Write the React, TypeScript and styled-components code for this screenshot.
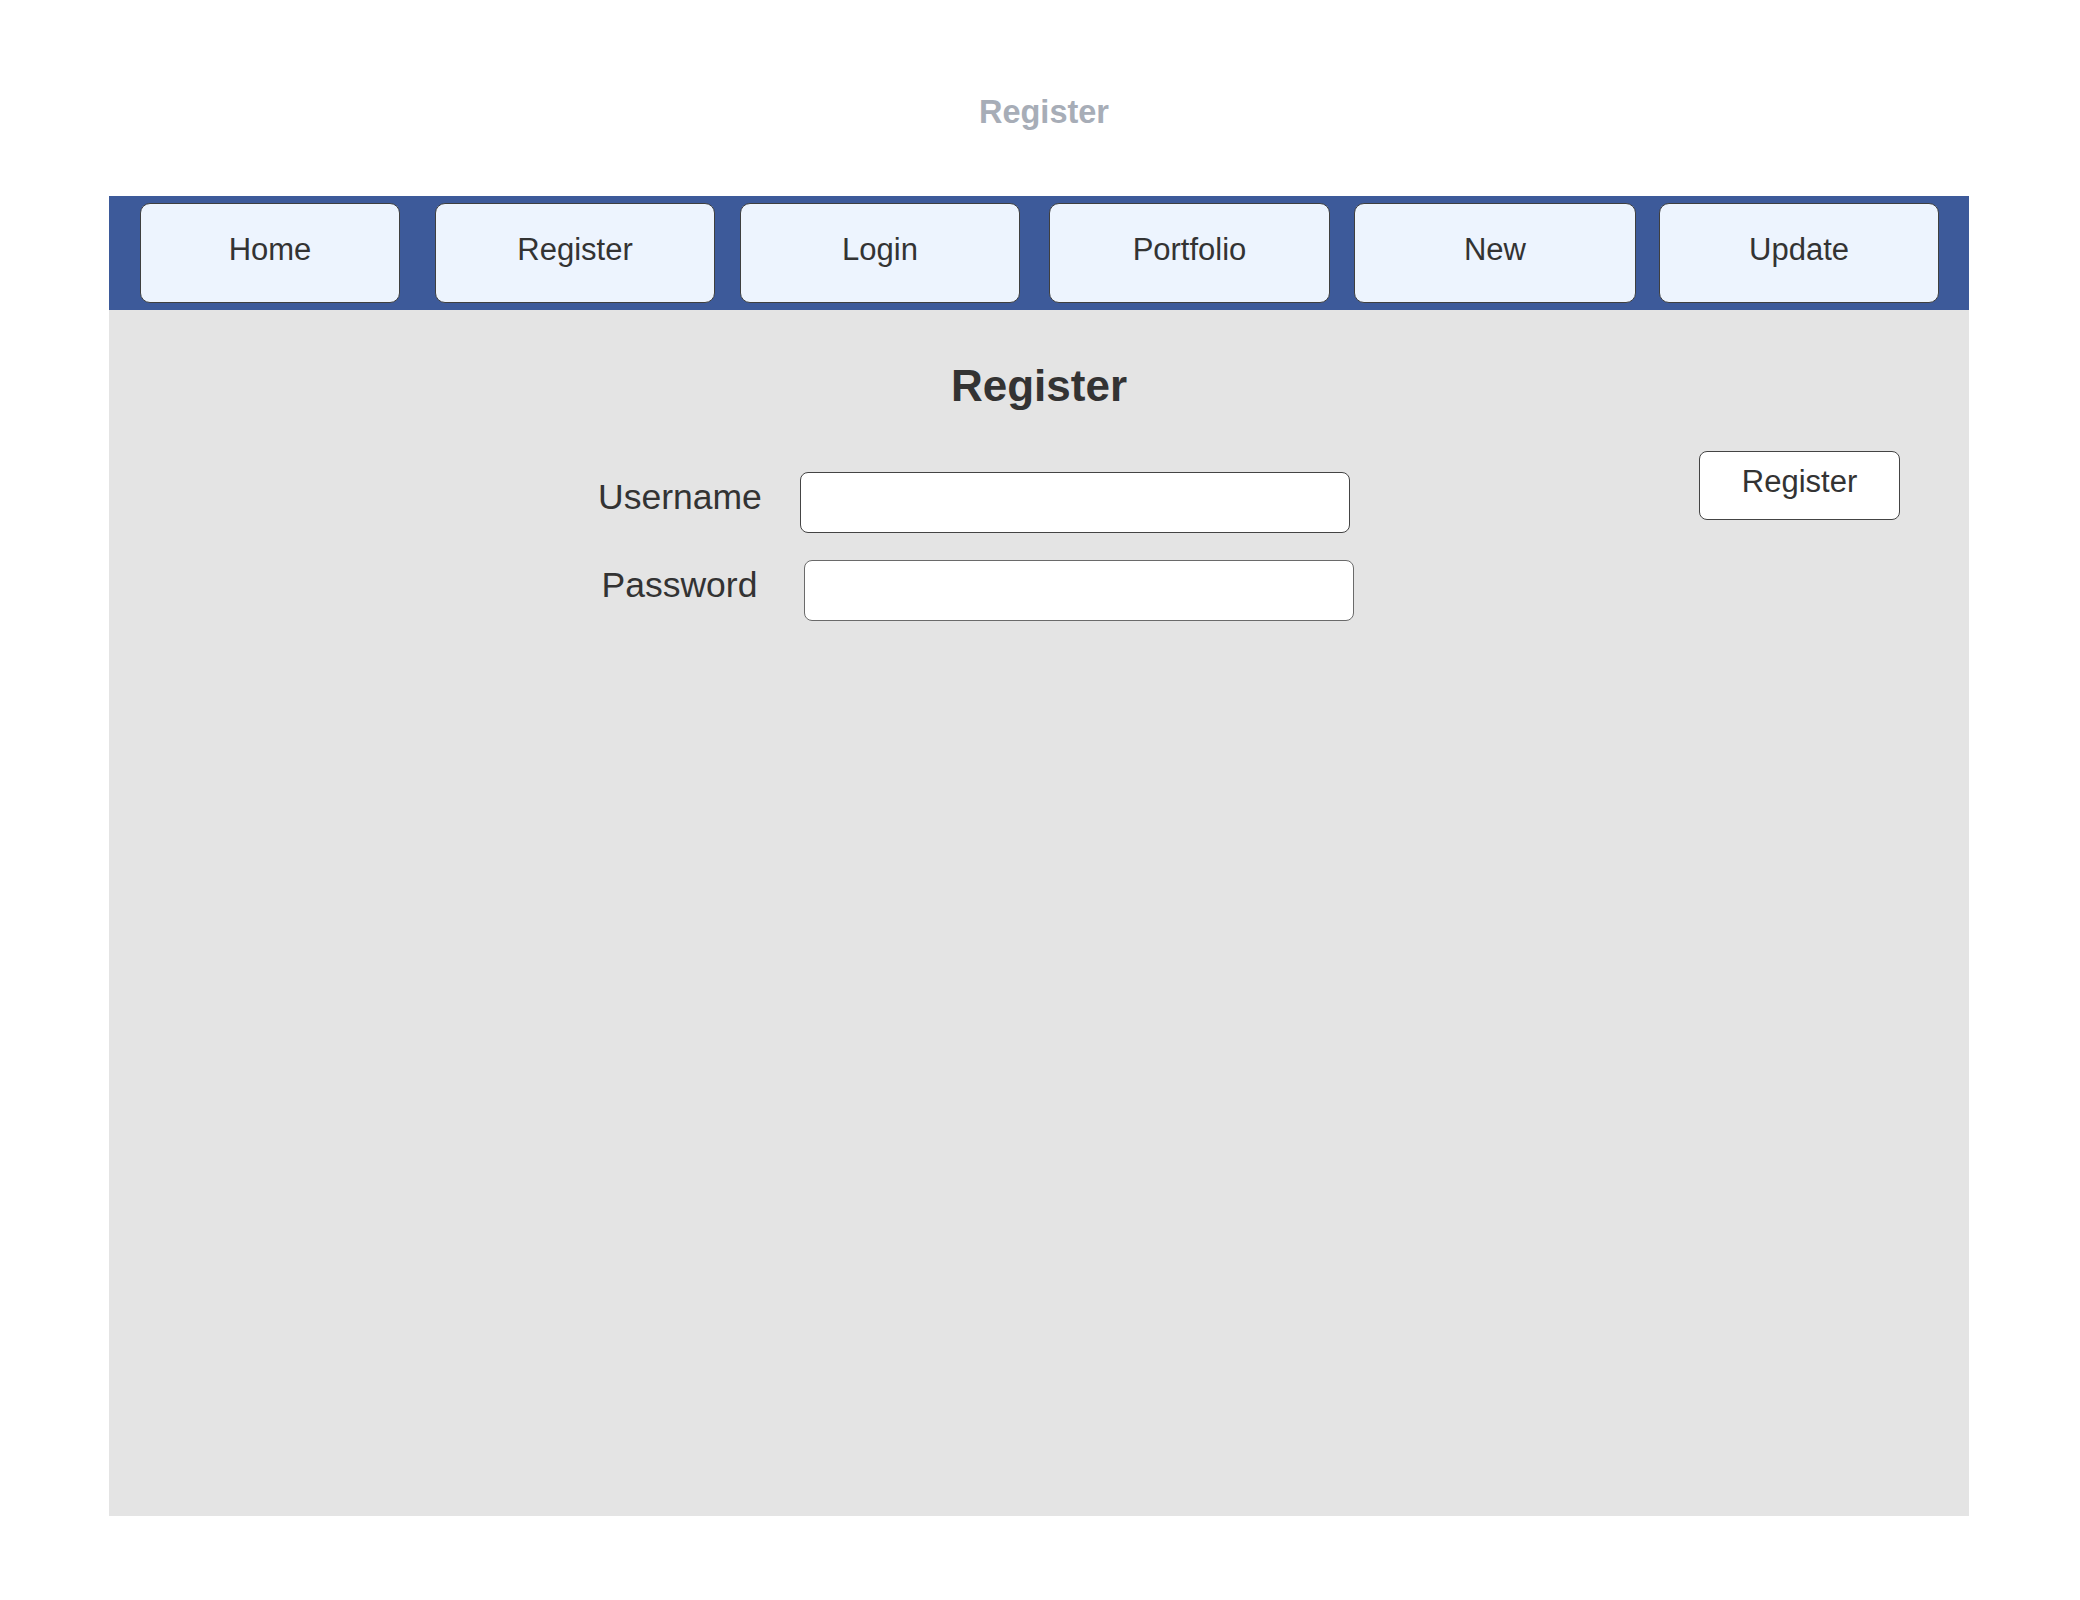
import React from 'react';
import styled, { createGlobalStyle } from 'styled-components';

const GlobalStyle = createGlobalStyle`
  body {
    margin: 0;
    background: #ffffff;
    font-family: "Liberation Sans", Arial, sans-serif;
    color: #333333;
  }
`;

const Page = styled.div`
  width: 1860px;
  padding: 0 111px 84px 109px;
`;

const PageTitle = styled.h1`
  margin: 0;
  height: 196px;
  box-sizing: border-box;
  padding: 96px 0 0 10px;
  font-size: 32.5px;
  line-height: 1;
  font-weight: bold;
  text-align: center;
  color: #a7adb7;
`;

const NavBar = styled.nav`
  display: flex;
  align-items: flex-start;
  height: 114px;
  box-sizing: border-box;
  padding: 7px 0 0 31px;
  background: #3d5a9a;
`;

const NavButton = styled.div<{ $width: number; $offset: number }>`
  width: ${(p) => p.$width}px;
  height: 100px;
  margin-left: ${(p) => p.$offset}px;
  box-sizing: border-box;
  display: flex;
  align-items: center;
  justify-content: center;
  padding-bottom: 7px;
  background: #edf4fe;
  border: 1.5px solid #3f3f3f;
  border-radius: 10px;
  font-size: 31px;
  color: #333333;
`;

const Panel = styled.main`
  height: 1206px;
  box-sizing: border-box;
  padding-top: 54px;
  background: #e4e4e4;
`;

const Heading = styled.h2`
  margin: 0;
  font-size: 44px;
  line-height: 1;
  font-weight: bold;
  text-align: center;
  color: #333333;
`;

const Body = styled.div`
  display: flex;
  align-items: flex-start;
`;

const Form = styled.form`
  display: flex;
  flex-direction: column;
  gap: 27px;
  margin: 64px 0 0 489px;
`;

const Row = styled.div`
  display: flex;
  align-items: flex-start;
`;

const Label = styled.label`
  width: 163px;
  padding-top: 8px;
  font-size: 35.5px;
  line-height: 1;
  text-align: center;
  white-space: nowrap;
  color: #333333;
`;

const Input = styled.input<{ $nudge?: number; $tone?: string }>`
  width: 550px;
  height: 61px;
  box-sizing: border-box;
  margin-left: ${(p) => 39 + (p.$nudge ?? 0)}px;
  background: #ffffff;
  border: 1.5px solid ${(p) => p.$tone ?? '#444444'};
  border-radius: 8px;
  outline: none;
`;

const SubmitButton = styled.button`
  width: 201px;
  height: 69px;
  margin: 43px 69px 0 auto;
  box-sizing: border-box;
  padding: 0 0 7px;
  background: #ffffff;
  border: 1.5px solid #444444;
  border-radius: 8px;
  font-family: "Liberation Sans", Arial, sans-serif;
  font-size: 31px;
  color: #333333;
`;

const navItems = [
  { label: 'Home', width: 260, offset: 0 },
  { label: 'Register', width: 280, offset: 35 },
  { label: 'Login', width: 280, offset: 25 },
  { label: 'Portfolio', width: 281, offset: 29 },
  { label: 'New', width: 282, offset: 24 },
  { label: 'Update', width: 280, offset: 23 },
];

const App = () => {
  return (
    <>
      <GlobalStyle />
      <Page>
        <PageTitle>Register</PageTitle>
        <NavBar>
          {navItems.map((item) => (
            <NavButton key={item.label} $width={item.width} $offset={item.offset}>
              {item.label}
            </NavButton>
          ))}
        </NavBar>
        <Panel>
          <Heading>Register</Heading>
          <Body>
            <Form onSubmit={(e) => e.preventDefault()}>
              <Row>
                <Label>Username</Label>
                <Input type="text" />
              </Row>
              <Row>
                <Label>Password</Label>
                <Input type="password" $nudge={4} $tone="#6a6a6a" />
              </Row>
            </Form>
            <SubmitButton type="button">Register</SubmitButton>
          </Body>
        </Panel>
      </Page>
    </>
  );
};

export default App;
